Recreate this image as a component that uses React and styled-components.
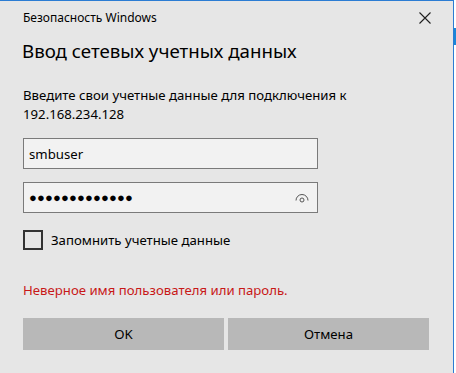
import React from "react"
import styled, { createGlobalStyle } from "styled-components"

const Global = createGlobalStyle`
    html, body {
        margin: 0;
        padding: 0;
        background: #ffffff;
    }
    body {
        font-family: "Noto Sans", "Open Sans", sans-serif;
        color: #000000;
    }
`

const Screen = styled.div`
    display: flex;
    width: 456px;
    height: 373px;
    overflow: hidden;
`

const Dialog = styled.div`
    box-sizing: border-box;
    width: 454px;
    height: 373px;
    flex: none;
    background: #e6e6e6;
    border-top: 1px solid #2b7cd3;
    border-right: 1px solid #2b7cd3;
    padding: 0 24px 0 23px;
    display: flex;
    flex-direction: column;
`

const Edge = styled.div`
    flex: 1;
    padding-top: 28px;
    background: #ffffff;
`

const EdgeTab = styled.div`
    height: 17px;
    background: #1a86d8;
`

const TitleBar = styled.div`
    display: flex;
    align-items: center;
    justify-content: space-between;
    height: 34px;
    margin-right: -1px;
`

const Caption = styled.span`
    font-size: 12px;
    line-height: 16px;
`

const Close = styled.svg`
    width: 12px;
    height: 12px;
    margin-right: -1px;
    stroke: #1f1f1f;
    stroke-width: 1.1;
`

const Heading = styled.h1`
    margin: 3px 0 0 -1px;
    font-size: 18.7px;
    font-weight: 400;
    line-height: 26px;
`

const Prompt = styled.p`
    margin: 22px 0 0;
    font-size: 13.2px;
    line-height: 19px;
`

const Fields = styled.div`
    display: flex;
    flex-direction: column;
    gap: 13px;
    margin-top: 14px;
    width: 295px;
`

const Field = styled.div`
    box-sizing: border-box;
    height: 31px;
    display: flex;
    align-items: center;
    justify-content: space-between;
    padding: 0 8px 0 5px;
    background: #f2f2f2;
    border: 1px solid #7a7a7a;
    font-size: 13.2px;
`

const Dots = styled.span`
    font-family: "Liberation Sans", sans-serif;
    font-size: 13px;
    letter-spacing: 0.15px;
`

const Reveal = styled.svg`
    width: 14px;
    height: 10px;
    fill: none;
    stroke: #555555;
    stroke-width: 1;
`

const Remember = styled.label`
    display: flex;
    align-items: center;
    gap: 8px;
    margin-top: 17px;
    font-size: 13.2px;
`

const Box = styled.span`
    box-sizing: border-box;
    width: 20px;
    height: 20px;
    border: 2px solid #333333;
`

const Error = styled.p`
    margin: 31px 0 0;
    font-size: 13.2px;
    line-height: 19px;
    color: #c81818;
`

const Buttons = styled.div`
    display: grid;
    grid-template-columns: 1fr 1fr;
    gap: 4px;
    margin-top: 18px;
`

const Button = styled.button`
    height: 32px;
    border: none;
    background: #b8b8b8;
    font-family: inherit;
    font-size: 13.2px;
    color: #000000;
    padding: 0;
`

const App = () => (
    <Screen>
        <Global />
        <Dialog>
            <TitleBar>
                <Caption>Безопасность Windows</Caption>
                <Close viewBox="0 0 12 12">
                    <path d="M0.5 0.5 L11.5 11.5 M11.5 0.5 L0.5 11.5" />
                </Close>
            </TitleBar>
            <Heading>Ввод сетевых учетных данных</Heading>
            <Prompt>
                Введите свои учетные данные для подключения к
                <br />
                192.168.234.128
            </Prompt>
            <Fields>
                <Field>smbuser</Field>
                <Field>
                    <Dots>●●●●●●●●●●●●●</Dots>
                    <Reveal viewBox="0 0 14 10">
                        <path d="M1 7.5 A6 6 0 0 1 13 7.5" />
                        <circle cx="7" cy="7" r="2" />
                    </Reveal>
                </Field>
            </Fields>
            <Remember>
                <Box />
                Запомнить учетные данные
            </Remember>
            <Error>Неверное имя пользователя или пароль.</Error>
            <Buttons>
                <Button>OK</Button>
                <Button>Отмена</Button>
            </Buttons>
        </Dialog>
        <Edge>
            <EdgeTab />
        </Edge>
    </Screen>
)

export default App
